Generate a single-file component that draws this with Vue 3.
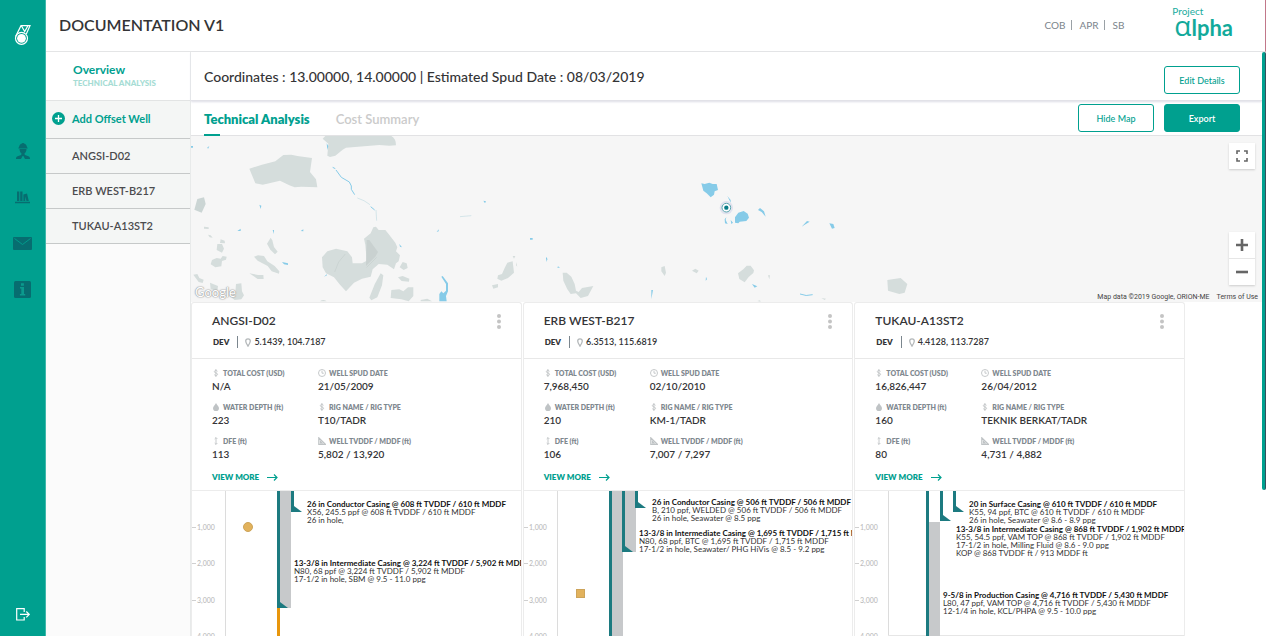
<script setup>
import { ref } from 'vue'

const navIcons = [
  { id: 'crew', label: 'Crew' },
  { id: 'library', label: 'Library' },
  { id: 'mail', label: 'Mail' },
  { id: 'info', label: 'Information' }
]

const tabs = ['Technical Analysis', 'Cost Summary']
const activeTab = ref(tabs[0])

const ticks = [
  { y: 37, label: '1,000' },
  { y: 73, label: '2,000' },
  { y: 110, label: '3,000' },
  { y: 146, label: '4,000' }
]

const makeStats = (cost, spud, depth, rig, dfe, tvd) => [
  { icon: 'dollar', label: 'TOTAL COST (USD)', value: cost },
  { icon: 'clock', label: 'WELL SPUD DATE', value: spud },
  { icon: 'drop', label: 'WATER DEPTH (ft)', value: depth },
  { icon: 'dollar', label: 'RIG NAME / RIG TYPE', value: rig },
  { icon: 'updown', label: 'DFE (ft)', value: dfe },
  { icon: 'angle', label: 'WELL TVDDF / MDDF (ft)', value: tvd }
]

const wells = [
  {
    name: 'ANGSI-D02',
    coords: '5.1439, 104.7187',
    stats: makeStats('N/A', '21/05/2009', '223', 'T10/TADR', '113', '5,802 / 13,920'),
    cement: [{ x: 89, y: 0, w: 10, h: 118 }],
    casings: [{ x: 86, h: 118, shoe: true }, { x: 100, h: 22, shoe: true }],
    open: { x: 86, y: 118 },
    marker: 'circle',
    notes: [
      { x: 116, y: 17, lines: ['26 in Conductor Casing @ 608 ft TVDDF / 610 ft MDDF', 'X56, 245.5 ppf @ 608 ft TVDDF / 610 ft MDDF', '26 in hole,'] },
      { x: 103, y: 76, lines: ['13-3/8 in Intermediate Casing @ 3,224 ft TVDDF / 5,902 ft MDDF', 'N80, 68 ppf @ 3,224 ft TVDDF / 5,902 ft MDDF', '17-1/2 in hole, SBM @ 9.5 - 11.0 ppg'] }
    ]
  },
  {
    name: 'ERB WEST-B217',
    coords: '6.3513, 115.6819',
    stats: makeStats('7,968,450', '02/10/2010', '210', 'KM-1/TADR', '106', '7,007 / 7,297'),
    cement: [{ x: 89, y: 0, w: 10, h: 150 }, { x: 102, y: 0, w: 10, h: 62 }],
    casings: [{ x: 86, h: 150 }, { x: 99, h: 62, shoe: true }, { x: 112, h: 18, shoe: true }],
    marker: 'square',
    notes: [
      { x: 129, y: 15, lines: ['26 in Conductor Casing @ 506 ft TVDDF / 506 ft MDDF', 'B, 210 ppf, WELDED @ 506 ft TVDDF / 506 ft MDDF', '26 in hole, Seawater @ 8.5 ppg'] },
      { x: 116, y: 46, lines: ['13-3/8 in Intermediate Casing @ 1,695 ft TVDDF / 1,715 ft MDDF', 'N80, 68 ppf, BTC @ 1,695 ft TVDDF / 1,715 ft MDDF', '17-1/2 in hole, Seawater/ PHG HiVis @ 8.5 - 9.2 ppg'] }
    ]
  },
  {
    name: 'TUKAU-A13ST2',
    coords: '4.4128, 113.7287',
    stats: makeStats('16,826,447', '26/04/2012', '160', 'TEKNIK BERKAT/TADR', '80', '4,731 / 4,882'),
    cement: [{ x: 75, y: 32, w: 10, h: 118 }],
    casings: [{ x: 72, h: 150 }, { x: 86, h: 31, shoe: true }, { x: 99, h: 22, shoe: true }],
    marker: '',
    baseline: true,
    notes: [
      { x: 115, y: 17, lines: ['20 in Surface Casing @ 610 ft TVDDF / 610 ft MDDF', 'K55, 94 ppf, BTC @ 610 ft TVDDF / 610 ft MDDF', '26 in hole, Seawater @ 8.6 - 8.9 ppg'] },
      { x: 102, y: 42, lines: ['13-3/8 in Intermediate Casing @ 868 ft TVDDF / 1,902 ft MDDF', 'K55, 54.5 ppf, VAM TOP @ 868 ft TVDDF / 1,902 ft MDDF', '17-1/2 in hole, Milling Fluid @ 8.6 - 9.0 ppg', 'KOP @ 868 TVDDF ft / 913 MDDF ft'] },
      { x: 89, y: 108, lines: ['9-5/8 in Production Casing @ 4,716 ft TVDDF / 5,430 ft MDDF', 'L80, 47 ppf, VAM TOP @ 4,716 ft TVDDF / 5,430 ft MDDF', '12-1/4 in hole, KCL/PHPA @ 9.5 - 10.0 ppg'] }
    ]
  }
]
</script>

<template>
  <div class="app">
    <nav class="rail" aria-label="Main">
      <a href="#" class="brand" aria-label="Home">
        <svg width="18" height="22" viewBox="0 0 18 22" fill="none" stroke="#fff">
          <circle cx="7.500" cy="14.300" r="6" stroke-width="1.200" />
          <circle cx="7.500" cy="14.300" r="4.400" fill="#fff" stroke="none" />
          <path d="M1.600 12.500 7 1.700h9L12.300 10M7.500 2l3.200 5.500L13.800 2" stroke-width="1.200" />
        </svg>
      </a>
      <div class="rail-links">
        <a v-for="icon in navIcons" :key="icon.id" href="#" :aria-label="icon.label">
          <svg v-if="icon.id === 'crew'" width="14" height="16" viewBox="0 0 14 16" fill="#076d70">
            <path d="M3 4.400C3 2 4.600.6 6.200.400V0h1.600v.4C9.400.6 11 2 11 4.400l.6.200v.8H2.400v-.8zM3.500 6h7c0 2-1 4-2.200 4.700L9 12l4 1.500c.7.400 1 1.200 1 2.500H9L7.400 13h-.8L5 16H0c0-1.300.3-2.100 1-2.500L5 12l.7-1.300C4.500 10 3.500 8 3.500 6z" />
          </svg>
          <svg v-else-if="icon.id === 'library'" width="15" height="13" viewBox="0 0 15 13" fill="#076d70">
            <path d="M2 .5h2.300V10H2zM5.200.5h2.300V10H5.200zM8.400 3.500l3.600-1L13.800 10h-2.300L10.200 5.500V10H8.400zM0 10.800h15v1.400H0z" />
          </svg>
          <svg v-else-if="icon.id === 'mail'" width="19" height="13" viewBox="0 0 19 13">
            <rect width="19" height="13" rx="1" fill="#076d70" />
            <path d="m1.500 1.500 8 6 8-6" fill="none" stroke="#00a08f" stroke-width=".9" />
          </svg>
          <svg v-else width="17" height="17" viewBox="0 0 17 17">
            <rect width="17" height="17" rx="1.500" fill="#076d70" />
            <path d="M7 2.300h2.900v2.400H7zM6 6h4v7h1.200v1.500H5.900V13h1.400V7.400H6z" fill="#0b9a8d" />
          </svg>
        </a>
      </div>
      <a href="#" class="logout" aria-label="Log out">
        <svg width="14" height="13" viewBox="0 0 14 13" fill="none" stroke="#fff" stroke-width="1.200">
          <path d="M8.200 4V.7H.7v11.300h7.500V9M4 6.400h9M10.300 3.500l2.900 2.900-2.900 2.900" />
        </svg>
      </a>
    </nav>

    <div class="main">
      <header class="topbar">
        <h1>DOCUMENTATION V1</h1>
        <ul class="crumbs">
          <li>COB</li>
          <li>APR</li>
          <li>SB</li>
        </ul>
        <div class="logo">
          <span class="logo-top">Project</span>
          <span class="logo-name"><span class="alpha">α</span>lpha</span>
        </div>
      </header>

      <div class="body">
        <aside class="side">
          <a href="#" class="overview">
            <strong>Overview</strong>
            <small>TECHNICAL ANALYSIS</small>
          </a>
          <button type="button" class="add">
            <svg width="13" height="13" viewBox="0 0 13 13">
              <circle cx="6.500" cy="6.500" r="6.500" fill="#00a08f" />
              <path d="M6.500 3v7M3 6.500h7" stroke="#fff" stroke-width="1.300" />
            </svg>
            Add Offset Well
          </button>
          <a v-for="well in wells" :key="well.name" href="#" class="side-item">{{ well.name }}</a>
        </aside>

        <main class="content">
          <section class="summary">
            <h2>Coordinates : 13.00000, 14.00000 | Estimated Spud Date : 08/03/2019</h2>
            <button type="button" class="btn">Edit Details</button>
          </section>

          <section class="toolbar">
            <div class="tabs" role="tablist">
              <button
                v-for="tab in tabs" :key="tab" type="button" role="tab" class="tab"
                :class="{ active: tab === activeTab }" :aria-selected="tab === activeTab"
                @click="activeTab = tab"
              >{{ tab }}</button>
            </div>
            <button type="button" class="btn">Hide Map</button>
            <button type="button" class="btn solid">Export</button>
          </section>

          <section class="map" aria-label="Map">
            <svg class="map-art" viewBox="0 0 1071 166" preserveAspectRatio="xMinYMin slice">
              <g transform="translate(-1 -6) scale(.33333)" fill="#d5dddc">
                <path d="M398 26l8-8h198q14 8 14 28l-20 1-30-2-100 8-10 6-22 18-16 4-8-4 3-36z" />
                <path d="M178 116l38-12 40-10 24-19 24-1 18 4 44 6-6 42 18 22 4 24-48-2-20 2-16-6-28-14-32 8-20 4-22-4z" />
                <path d="M22 207l20-5 5 20-12 26-22-9z" fill="#cbd5d4" />
                <path d="M42 290l14 2v5l-14-1zM54 314l8 2 6 7-9-1zM92 328l12 4 1 8-15-1zM82 342l14 0 6 14-6 12-16-8zM66 390l14-6 12 2 6-8 12 2-2 9-12 4-2 16-18 3-14-9zM10 434l12-2 6 12 13 5-3 10-12-3zM60 458l24 10-2 14-20-4zM138 462l16-2 2 24 6 12-8 12-20 2-12-10 14-12z" />
                <path d="M242 323l5 8 5 20 11 14-8 8-14-14-10-18zM192 380l12-4 18 2 10 16 22 14 14 16-1 7-22-7-12-16-30-16zM178 430l26 5 16 0 1 12-18 0z" />
                <path d="M396 382l16-18 26-8 34 8 14 18 2 18 28 0 14-8-4-48-4-18 20-16 8-18 8-2 8 10 20 0 8 10 22 28 6 14-4 12 12 12-4 18-8 6-6 18-20-14-26-2-18 16-6 22-26 6-24 12-24 26-18-20-18-22-24-12-10-18z" />
                <path d="M530 330l8 0 26 36-8 14-28 28z" fill="#c9d1d0" />
                <path d="M434 426l12-30 20-24M530 412l30-30" fill="none" stroke="#c6cecd" stroke-width="2" />
                <path d="M638 396l12 4 3 14-12 6-12-8zM624 442l14-4 20 8-1 9-22-2zM572 430l8 6-4 30-14 36-18 9-6-8 16-40zM604 480l24-2 12 6 14-12 16 0 0 26-14 16-22-6-32-4zM692 510l20-4 14 8h-34zM390 514q10-8 20 0z" />
                <path d="M952 398l16-4 4 34-18 16-20 8-12-6 2-10 12-4 8-18zM906 466l18-4 0 10-14 4zM968 378h8l-4 8zM978 396l4 14-4-4z" />
              </g>
              <g transform="translate(-1 -6) scale(.33333)" fill="#86cbe8">
                <path d="M428 112l8 4M438 120l16 22 24 14 6 12 0 10 10 16M542 230l12 10" fill="none" stroke="#86cbe8" stroke-width="3" />
                <path d="M502 204l20 8 18 12M558 240l2 32M810 260l34-3" fill="none" stroke="#c3dce3" stroke-width="2" />
                <path d="M3 48h6v5H3zM52 52l6-3-4 8zM410 40l5 8-3 12zM208 224l6 3-2 10zM142 303l10-7 0 7zM332 303l8-5 0 6zM248 300l4 0 0 12zM276 396l18 4v5l-12-2zM402 440l8-7 1 3zM628 342l8 10-6-2zM740 306l6-8 0 6zM880 212l8 2-3 6zM1020 324h8v5h-8zM1068 384l4 4-2 8zM754 440l4-2 16 22 0 24-6 14 2 16h-22l0-22 6-8 6 6 8-8 0-20z" />
              </g>
              <g transform="translate(349 -6) scale(.33333)">
                <g fill="#86cbe8">
                  <path d="M484 160l10 2 14-4 10 4 12 0 4 18-10 4-2 10-10 8-12-12-10-8zM585 262l10-14 16-5 12 8 4 12-8 10-20 2-4 5-10-2zM654 240l6-6 12 10 5 16-12-14zM785 290l16-17 8 2-16 10zM868 280l12 2 4 12-8 2zM562 198l10 12 0 8zM559 262l-2 8 6 12-8-2-1-12zM572 270l7 8-5 4zM636 462l16 7-8 4zM498 440l3 8-4 4zM334 480l5 0-5 28zM18 380l5 8h-5zM52 413l8 0-6-4z" />
                  <path d="M780 492q18 8 38 2" fill="none" stroke="#86cbe8" stroke-width="3" />
                </g>
                <path fill="#d5dddc" d="M68 428l12 0 14 12 10 22 4 20 8 4 10-12 34-6-16 30-22 6-14-14-16 2-10-14-12-26zM364 412l10-4 4 20-4 10-10-14zM456 422l10-6 10 6-6 8zM594 430l16-12 10-11 12 0 10 14-2 8-14 12-12 16-16-10zM1042 450l40-6 20 18-8 26-16 4-34-10zM684 436l6 0-2 12zM844 504l14 2-4 4zM652 513l8-2 2 4z" />
                <circle cx="559" cy="233" r="20" fill="#b9bddf" opacity=".35" />
                <circle cx="559" cy="233" r="13" fill="#fff" stroke="#5aa6ae" stroke-width="3" />
                <circle cx="559" cy="233" r="6.500" fill="#087c87" />
              </g>
            </svg>
            <span class="google">Google</span>
            <button type="button" class="map-btn full" aria-label="Fullscreen">
              <svg width="12" height="12" viewBox="0 0 12 12" fill="none" stroke="#666" stroke-width="1.600">
                <path d="M1 4V1h3M8 1h3v3M11 8v3H8M4 11H1V8" />
              </svg>
            </button>
            <div class="zoom">
              <button type="button" class="map-btn" aria-label="Zoom in">
                <svg width="12" height="12" viewBox="0 0 12 12"><path d="M6 0v12M0 6h12" stroke="#666" stroke-width="2.600" /></svg>
              </button>
              <button type="button" class="map-btn" aria-label="Zoom out">
                <svg width="12" height="12" viewBox="0 0 12 12"><path d="M0 6h12" stroke="#666" stroke-width="2.600" /></svg>
              </button>
            </div>
            <p class="legal"><span>Map data ©2019 Google, ORION-ME</span><a href="#">Terms of Use</a></p>
          </section>

          <section class="cards">
            <article v-for="well in wells" :key="well.name" class="card">
              <header class="card-head">
                <div>
                  <h3>{{ well.name }}</h3>
                  <p class="meta">
                    <b>DEV</b>
                    <svg width="6" height="9" viewBox="0 0 6 9" fill="none" stroke="#b4b8ba" stroke-width="1.300">
                      <path d="M3 8.200C1.500 6 .7 4.500.7 3.100a2.300 2.300 0 0 1 4.600 0C5.300 4.500 4.500 6 3 8.200z" />
                    </svg>
                    <span>{{ well.coords }}</span>
                  </p>
                </div>
                <button type="button" class="more" :aria-label="'Options for ' + well.name">
                  <svg width="4" height="15" viewBox="0 0 4 15" fill="#c4c4c4">
                    <circle cx="2" cy="2" r="2" /><circle cx="2" cy="7.500" r="2" /><circle cx="2" cy="13" r="2" />
                  </svg>
                </button>
              </header>

              <div class="card-body">
                <dl class="stats">
                  <div v-for="stat in well.stats" :key="stat.label">
                    <dt>
                      <svg width="8" height="8" viewBox="0 0 8 8" fill="none" stroke="#bfc3c5">
                        <path v-if="stat.icon === 'dollar'" d="M5.500 2.300C5 1.200 2.300 1.200 2.300 2.700c0 1.600 3.300.9 3.300 2.600 0 1.500-2.800 1.500-3.400.3M3.900 0v8" stroke-width=".9" />
                        <g v-else-if="stat.icon === 'clock'" stroke-width=".9"><circle cx="4" cy="4" r="3.500" /><path d="M4 1.800V4.200h1.800" /></g>
                        <path v-else-if="stat.icon === 'drop'" d="M4 0c1 2 3 3.400 3 5.200A2.900 2.900 0 0 1 1 5.200C1 3.400 3 2 4 0z" fill="#bfc3c5" stroke="none" />
                        <path v-else-if="stat.icon === 'updown'" d="M4 .6v6.800M2.700 1.900 4 .6l1.300 1.300M2.700 6.100 4 7.400l1.300-1.300" stroke-width=".9" />
                        <path v-else d="M.8.8v6.500h6.600zM2.500 4.500v1.300h1.300z" stroke-width="1.200" />
                      </svg>
                      {{ stat.label }}
                    </dt>
                    <dd>{{ stat.value }}</dd>
                  </div>
                </dl>
                <a href="#" class="view">VIEW MORE
                  <svg width="11" height="7" viewBox="0 0 11 7" fill="none" stroke="#00a08f" stroke-width="1.200">
                    <path d="M0 3.500h10M7 .5l3 3-3 3" />
                  </svg>
                </a>
              </div>

              <svg class="chart" role="img" :aria-label="'Casing diagram of ' + well.name">
                <g transform="translate(-1 -1)">
                  <path d="M34.500 0v150" stroke="#dcdcdc" />
                  <g v-for="tick in ticks" :key="tick.y">
                    <path :d="`M0 ${tick.y}.500h5`" stroke="#d0d0d0" />
                    <text class="tick" x="6" :y="tick.y + 3">{{ tick.label }}</text>
                  </g>
                  <path v-if="well.baseline" d="M34 145.500h300" stroke="#e6e6e6" />
                  <rect v-for="c in well.cement" :key="c.x" :x="c.x" :y="c.y" :width="c.w + 1" :height="c.h" fill="#c7c9cb" />
                  <rect v-if="well.open" :x="well.open.x" :y="well.open.y" width="3" height="40" fill="#e8960c" />
                  <g v-for="c in well.casings" :key="c.x" fill="#1c7a80">
                    <rect :x="c.x" y="0" width="3" :height="c.h" />
                    <path v-if="c.shoe" :d="`M${c.x} ${c.h - 6}h3l8 6H${c.x}z`" />
                  </g>
                  <circle v-if="well.marker === 'circle'" cx="57" cy="37" r="4.500" fill="#e2b25c" stroke="#cda45a" />
                  <rect v-if="well.marker === 'square'" x="53.500" y="99.500" width="8" height="8" fill="#e2b25c" stroke="#cda45a" />
                  <text v-for="note in well.notes" :key="note.y" class="note">
                    <tspan v-for="(line, i) in note.lines" :key="i" :x="note.x" :y="note.y + i * 8" :class="{ strong: i === 0 }">{{ line }}</tspan>
                  </text>
                </g>
              </svg>
            </article>
          </section>
        </main>

        <div class="scroll" aria-hidden="true"><div class="thumb"></div></div>
      </div>
    </div>
  </div>
</template>

<style>
body { background: #fff; }
</style>

<style scoped>
* { box-sizing: border-box; }
h1, h2, h3, p, ul, dl, dd { margin: 0; padding: 0; }
a { color: inherit; text-decoration: none; }
button { font: inherit; color: inherit; border: 0; background: none; padding: 0; cursor: pointer; }
svg { display: block; flex: none; }

.app {
  display: flex;
  height: 100vh;
  overflow: hidden;
  font-family: Lato, "Open Sans", sans-serif;
  color: #343436;
}

.rail {
  flex: 0 0 46px;
  display: flex;
  flex-direction: column;
  align-items: center;
  background: #00a08f;
  border-right: 1px solid #3fb8ab;
}
.brand { margin-top: 24px; }
.rail-links {
  display: grid;
  grid-auto-rows: 46px;
  place-items: center;
  margin-top: 82px;
}
.logout { margin: auto 0 15px; }

.main { flex: 1; min-width: 0; display: flex; flex-direction: column; }
.topbar {
  flex: 0 0 52px;
  display: flex;
  align-items: center;
  padding: 0 32px 2px 13px;
  border-bottom: 1px solid #e4e5e6;
  border-right: 1px solid #c2788a;
}
h1 { flex: 1; font-size: 16px; line-height: 20px; font-weight: 600; }
.crumbs {
  display: flex;
  list-style: none;
  font-size: 10px;
  line-height: 10px;
  color: #7c858c;
  margin-right: 48px;
}
.crumbs li + li { border-left: 1px solid #9aa1a6; margin-left: 6px; padding-left: 7px; }
.logo { display: flex; flex-direction: column; color: #1aac9e; margin-bottom: 8px; }
.logo-top { font-size: 10px; line-height: 11px; }
.logo-name { font-size: 22px; line-height: 17px; font-weight: 700; padding-left: 2px; color: #12aa9b; }
.alpha { font-family: "Open Sans", sans-serif; font-size: 28px; line-height: 17px; font-weight: 500; }

.body { flex: 1; min-height: 0; display: flex; }
.side {
  flex: 0 0 145px;
  background: #fbfbfb;
  border-right: 1px solid #e8eaea;
  font-size: 11px;
  font-weight: 600;
}
.overview {
  display: block;
  height: 49px;
  padding: 10px 0 0 27px;
  background: #fff;
  border-bottom: 1px solid #e2e4e4;
  color: #00a08f;
}
.overview strong { display: block; font-size: 12px; line-height: 15px; font-weight: 700; }
.overview small { display: block; font-size: 8px; line-height: 12px; font-weight: 900; color: #a5dcd4; }
.add {
  display: flex;
  align-items: center;
  gap: 7px;
  width: 100%;
  height: 38px;
  padding: 0 0 2px 6px;
  background: #f4f6f5;
  border-bottom: 1px solid #c6c9c9;
  color: #00a08f;
  font-weight: 700;
}
.side-item {
  display: flex;
  align-items: center;
  height: 35px;
  padding: 0 0 2px 26px;
  background: #f4f6f5;
  border-bottom: 1px solid #c6c9c9;
  color: #4b4b4d;
}

.content { flex: 1; min-width: 0; display: flex; flex-direction: column; }
.summary {
  flex: 0 0 49px;
  display: flex;
  align-items: center;
  justify-content: space-between;
  padding: 8px 22px 0 13px;
  border-bottom: 1px solid #e2e2e8;
  box-shadow: 0 1px 2px #dddde6;
}
h2 { font-size: 14px; line-height: 18px; font-weight: 500; margin-bottom: 6px; }
.btn {
  width: 76px;
  height: 28px;
  border: 1px solid #00a08f;
  border-radius: 3px;
  background: #fff;
  color: #00a08f;
  font-size: 9px;
  font-weight: 500;
}
.btn.solid { background: #00a08f; color: #fff; font-weight: 600; }
.toolbar {
  flex: 0 0 35px;
  display: flex;
  align-items: center;
  gap: 10px;
  padding: 0 22px 0 13px;
  border-bottom: 1px solid #e2e2e4;
}
.tabs { flex: 1; display: flex; align-self: stretch; gap: 26px; }
.tab { position: relative; padding-top: 1px; font-size: 13px; font-weight: 600; color: #cbcbcb; }
.tab.active { color: #00a08f; font-weight: 800; }
.tab.active::after {
  content: "";
  position: absolute;
  left: 0;
  bottom: -1px;
  width: 16px;
  height: 2px;
  background: #00a08f;
}

.map { position: relative; flex: 0 0 166px; background: #f6f6f6; overflow: hidden; }
.map-art { width: 100%; height: 100%; }
.google {
  position: absolute;
  left: 4px;
  bottom: 1px;
  font-size: 13px;
  line-height: 18px;
  color: #fff;
  text-shadow: 0 0 1px #999, 0 0 1px #999, 0 0 2px #aaa;
}
.map-btn { display: grid; place-items: center; width: 26px; height: 26px; background: #fff; }
.full { position: absolute; top: 7px; right: 7px; box-shadow: 0 1px 2px #ccc; }
.zoom { position: absolute; right: 7px; bottom: 17px; background: #fff; box-shadow: 0 1px 2px #ccc; }
.zoom .map-btn + .map-btn { border-top: 1px solid #e6e6e6; height: 27px; }
.legal {
  position: absolute;
  right: 4px;
  bottom: 1px;
  display: flex;
  gap: 7px;
  font: 7px/8px Roboto, sans-serif;
  color: #444;
}

.cards {
  flex: 1;
  min-height: 0;
  display: grid;
  grid-template-columns: repeat(3, 1fr);
  gap: 1px;
  padding-right: 77px;
}
.card {
  min-width: 0;
  display: flex;
  flex-direction: column;
  border: 1px solid #ececec;
  border-width: 1px 1px 0;
  border-radius: 3px 3px 0 0;
  background: #fff;
}
.card-head {
  flex: 0 0 56px;
  display: flex;
  justify-content: space-between;
  padding: 8px 20px 0;
  border-bottom: 1px solid #e8e8e8;
}
h3 { font-size: 12px; line-height: 20px; font-weight: 600; }
.meta { display: flex; align-items: center; font-size: 9px; line-height: 12px; font-weight: 600; margin-top: 5px; }
.meta b { font-size: 8px; font-weight: 800; padding: 0 8px 0 1px; border-right: 1px solid #7b868e; margin-right: 7px; }
.meta span { margin-left: 3px; }
.more { align-self: flex-start; margin-top: 3px; }
.card-body { flex: 0 0 132px; padding: 8px 20px 0; border-bottom: 1px solid #ececec; }
.stats { display: grid; grid-template-columns: 106px 1fr; row-gap: 8px; }
dt { display: flex; align-items: center; gap: 3px; font-size: 7px; line-height: 12px; font-weight: 800; color: #7f8990; }
dd { font-size: 10px; line-height: 14px; font-weight: 600; }
.view {
  display: inline-flex;
  align-items: center;
  gap: 8px;
  margin-top: 11px;
  font-size: 8px;
  line-height: 10px;
  font-weight: 800;
  color: #00a08f;
}

.chart { flex: 1; min-height: 0; width: 100%; overflow: hidden; }
.tick { font-size: 7px; font-weight: 500; fill: #bcbcbc; }
.note { font-size: 8px; fill: #333; }
.strong { font-weight: 700; fill: #111; }

.scroll { flex: 0 0 4px; }
.thumb { height: 75%; background: #00a08f; border-right: 1px solid #34505e; border-radius: 2px; }
</style>
